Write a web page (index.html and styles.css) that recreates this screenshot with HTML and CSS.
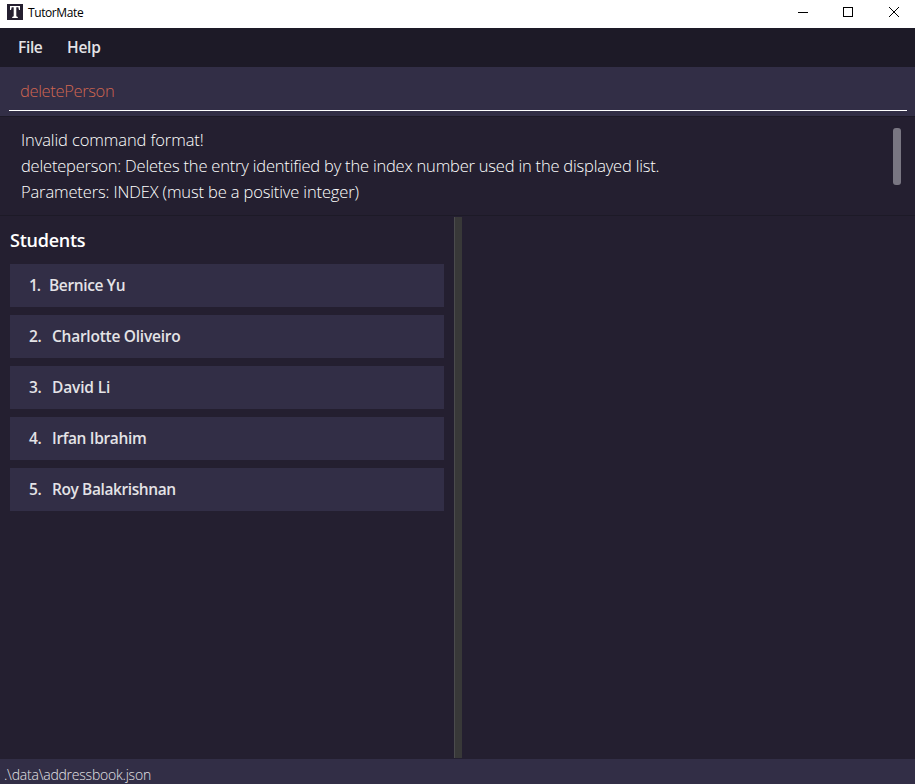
FILE: index.html
```html
<!DOCTYPE html>
<html lang="en">
<head>
<meta charset="utf-8">
<title>TutorMate</title>
<link rel="stylesheet" href="styles.css">
</head>
<body>
<div class="window">
  <header class="titlebar">
    <svg class="logo" width="16" height="16" viewBox="0 0 16 16"><path fill="#241f30" d="M0 0h16v16H0z"/><path fill="#fff" d="M3 2h10v4h-1l-.7-2.7H9.3v9l1.5.8v.9H5.2v-.9l1.5-.8v-9h-2L4 6H3z"/></svg>
    <span class="app-name">TutorMate</span>
    <div class="controls">
      <svg width="10" height="10" shape-rendering="crispEdges"><path d="M0 5h10v1H0z"/></svg>
      <svg width="10" height="10" shape-rendering="crispEdges"><path fill="none" stroke="#000" d="M.5.5h9v9h-9z"/></svg>
      <svg width="10" height="10"><path stroke="#000" d="M0 0l10 10M10 0L0 10"/></svg>
    </div>
  </header>
  <nav class="menubar"><span class="file">File</span><span class="help">Help</span></nav>
  <div class="command"><div class="field"><span class="entry">deletePerson</span></div></div>
  <section class="result">
    <div class="lines">
      <p><span class="r1">Invalid command format!</span></p>
      <p><span class="r2">deleteperson: Deletes the entry identified by the index number used in the displayed list.</span></p>
      <p><span class="r3">Parameters: INDEX (must be a positive integer)</span></p>
    </div>
    <div class="thumb"></div>
  </section>
  <main class="split">
    <section class="students">
      <h1><span>Students</span></h1>
      <ol>
        <li><span class="num one">1.</span><span class="n1">Bernice Yu</span></li>
        <li><span class="num">2.</span><span class="n2">Charlotte Oliveiro</span></li>
        <li><span class="num">3.</span><span class="n3">David Li</span></li>
        <li><span class="num">4.</span><span class="n4">Irfan Ibrahim</span></li>
        <li><span class="num">5.</span><span class="n5">Roy Balakrishnan</span></li>
      </ol>
    </section>
    <div class="divider"></div>
    <section class="detail"></section>
  </main>
  <footer class="status"><span>.\data\addressbook.json</span></footer>
</div>
</body>
</html>
```
FILE: styles.css
```css
* { box-sizing: border-box; margin: 0; padding: 0; }
body { background: #241f30; font-family: "Open Sans", "Noto Sans", sans-serif; color: #fff; }
.window { width: 915px; height: 784px; display: flex; flex-direction: column; overflow: hidden; white-space: nowrap; }
.titlebar { height: 28px; background: #fff; color: #000; display: flex; align-items: flex-start; padding: 4px 16px 0 7px; }
.logo { display: block; }
.app-name { margin-left: 5px; font-size: 12px; line-height: 17px; letter-spacing: -.4px; }
.controls { margin: 3px 0 0 auto; display: flex; gap: 35px; }
.controls svg { display: block; }
.controls svg:last-child { margin-left: 1px; }
.menubar { height: 39px; background: #1d1a27; display: flex; padding-left: 18px; gap: 24px; font-size: 15.5px; font-weight: 600; line-height: 39px; color: #e4e3e6; }
.file { width: 25px; letter-spacing: -.35px; }
.help { letter-spacing: -.25px; }
.command { height: 50px; background: #322e46; padding: 0 8px 0 9px; border-bottom: 1px solid #1d1a27; flex: none; }
.field { height: 44px; border-bottom: 1px solid #fff; padding: 4px 0 0 11px; line-height: 40px; font-size: 16.5px; font-weight: 300; color: #d06651; letter-spacing: -.35px; }
.result { height: 99px; flex: none; border-bottom: 1px solid #1d1a27; padding: 10px 14px 0 21px; display: flex; justify-content: space-between; font-size: 16.5px; font-weight: 300; line-height: 26px; letter-spacing: -.2px; }
.r1 { letter-spacing: -.1px; }
.r3 { letter-spacing: -.14px; }
.thumb { width: 8px; height: 57px; border-radius: 3px; background: #797682; margin-top: 1px; }
.split { flex: 1; display: flex; padding-top: 1px; }
.students { width: 454px; padding: 10px; }
h1 { font-size: 18px; font-weight: 600; line-height: 26px; height: 37px; letter-spacing: -.25px; }
ol { list-style: none; display: flex; flex-direction: column; gap: 8px; }
li { height: 43px; background: #322e46; padding-left: 19px; line-height: 43px; font-size: 15.5px; font-weight: 600; color: #e4e3e6; display: flex; letter-spacing: -.25px; }
.num { width: 23px; }
.one { width: 20px; letter-spacing: -1px; }
.n1, .n4 { letter-spacing: -.35px; }
.n3 { letter-spacing: -.15px; }
.n5 { letter-spacing: -.4px; }
.divider { width: 8px; margin-bottom: 1px; background: #383838; border-left: 1px solid #4b4b4d; }
.detail { flex: 1; }
.status { height: 25px; background: #322e46; padding-left: 4px; font-size: 14px; font-weight: 300; line-height: 31px; color: #e4e3e6; letter-spacing: -.22px; }
```
